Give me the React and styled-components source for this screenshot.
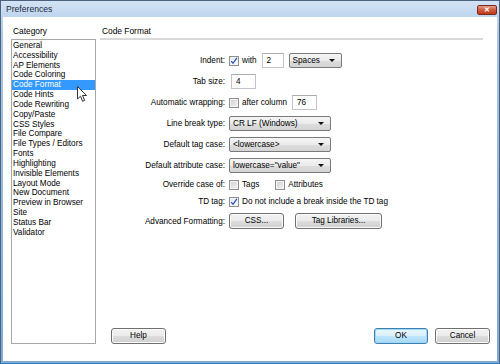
import React from "react"
import styled, { createGlobalStyle } from "styled-components"

const GlobalStyle = createGlobalStyle`
  html, body {
    margin: 0;
    padding: 0;
    background: #ffffff;
  }
  body {
    font-family: "Liberation Sans", Arial, sans-serif;
    font-size: 8.2px;
    color: #000000;
  }
`

const categories = [
  "General",
  "Accessibility",
  "AP Elements",
  "Code Coloring",
  "Code Format",
  "Code Hints",
  "Code Rewriting",
  "Copy/Paste",
  "CSS Styles",
  "File Compare",
  "File Types / Editors",
  "Fonts",
  "Highlighting",
  "Invisible Elements",
  "Layout Mode",
  "New Document",
  "Preview in Browser",
  "Site",
  "Status Bar",
  "Validator",
]

const CheckIcon = () => (
  <svg width="8" height="8" viewBox="0 0 8 8">
    <path d="M1.2 4.2 L3 6.3 L6.9 0.9" fill="none" stroke="#2f4fb8" strokeWidth="1.3" />
  </svg>
)

const Cursor = () => (
  <svg width="12" height="17" viewBox="0 0 12 17">
    <path
      d="M0.5 0.5 L0.5 13 L3.5 10.2 L5.6 15.3 L7.6 14.4 L5.5 9.5 L9.6 9.5 Z"
      fill="#ffffff"
      stroke="#333333"
      strokeWidth="1"
      strokeLinejoin="round"
    />
  </svg>
)

const App = () => {
  return (
    <>
      <GlobalStyle />
      <Window>
        <TitleBar>
          <Title>Preferences</Title>
          <CloseButton>✕</CloseButton>
        </TitleBar>
        <Body>
          <LeftColumn>
            <Heading>Category</Heading>
            <CategoryList>
              {categories.map((c) => (
                <CategoryItem key={c} selected={c === "Code Format"}>
                  {c}
                </CategoryItem>
              ))}
              <CursorWrap>
                <Cursor />
              </CursorWrap>
            </CategoryList>
          </LeftColumn>

          <RightColumn>
            <Heading>Code Format</Heading>
            <Separator />
            <Form>
              <Row>
                <Label>Indent:</Label>
                <Controls>
                  <Check>
                    <Box checked>
                      <CheckIcon />
                    </Box>
                    with
                  </Check>
                  <TextBox w={22}>2</TextBox>
                  <Select w={53} style={{ marginLeft: 2 }}>
                    Spaces
                    <Arrow />
                  </Select>
                </Controls>
              </Row>
              <Row>
                <Label>Tab size:</Label>
                <Controls>
                  <TextBox w={25}>4</TextBox>
                </Controls>
              </Row>
              <Row>
                <Label>Automatic wrapping:</Label>
                <Controls>
                  <Check>
                    <Box />
                    after column
                  </Check>
                  <TextBox w={25}>76</TextBox>
                </Controls>
              </Row>
              <Row>
                <Label>Line break type:</Label>
                <Controls>
                  <Select w={102}>
                    CR LF (Windows)
                    <Arrow />
                  </Select>
                </Controls>
              </Row>
              <Row>
                <Label>Default tag case:</Label>
                <Controls>
                  <Select w={102}>
                    &lt;lowercase&gt;
                    <Arrow />
                  </Select>
                </Controls>
              </Row>
              <Row>
                <Label>Default attribute case:</Label>
                <Controls>
                  <Select w={102}>
                    lowercase="value"
                    <Arrow />
                  </Select>
                </Controls>
              </Row>
              <Row h={11}>
                <Label>Override case of:</Label>
                <Controls gap={16}>
                  <Check>
                    <Box />
                    Tags
                  </Check>
                  <Check>
                    <Box />
                    Attributes
                  </Check>
                </Controls>
              </Row>
              <Row h={11}>
                <Label>TD tag:</Label>
                <Controls>
                  <Check>
                    <Box checked>
                      <CheckIcon />
                    </Box>
                    Do not include a break inside the TD tag
                  </Check>
                </Controls>
              </Row>
              <Row h={16}>
                <Label>Advanced Formatting:</Label>
                <Controls gap={11}>
                  <Button w={55}>CSS...</Button>
                  <Button w={87}>Tag Libraries...</Button>
                </Controls>
              </Row>
            </Form>
            <Footer>
              <Button w={55}>Help</Button>
              <FooterRight>
                <Button w={54} primary>
                  OK
                </Button>
                <Button w={55}>Cancel</Button>
              </FooterRight>
            </Footer>
          </RightColumn>
        </Body>
      </Window>
    </>
  )
}

export default App

const Window = styled.div`
  width: 500px;
  height: 364px;
  box-sizing: border-box;
  display: flex;
  flex-direction: column;
  border: 1px solid #4c6380;
  border-bottom-color: #2f7fc0;
  padding: 0 2px 2px 2px;
  background: linear-gradient(#c9dcf2, #a9c6e6 40px, #7fa9d6);
`

const TitleBar = styled.div`
  height: 16px;
  display: flex;
  align-items: center;
  justify-content: space-between;
  padding: 0 2px 0 5px;
  margin: 0 -2px;
  background: linear-gradient(#d3e3f5, #bed5ee);
`

const Title = styled.div`
  font-size: 8.6px;
  color: #1c2a3a;
`

const CloseButton = styled.div`
  width: 20px;
  height: 10px;
  box-sizing: border-box;
  margin-top: 2px;
  border: 1px solid #7b2a1c;
  border-radius: 2px;
  background: linear-gradient(#e69c88, #cf5a3e 50%, #c0391c);
  color: #ffffff;
  font-size: 7px;
  font-weight: bold;
  line-height: 8px;
  text-align: center;
`

const Body = styled.div`
  flex: 1;
  display: flex;
  gap: 4px;
  padding: 8px 7px 17px 8px;
  background: #ffffff;
`

const LeftColumn = styled.div`
  width: 85px;
  display: flex;
  flex-direction: column;
`

const RightColumn = styled.div`
  flex: 1;
  display: flex;
  flex-direction: column;
`

const Heading = styled.div`
  height: 12px;
  line-height: 12px;
  padding-left: 2px;
  font-size: 8.4px;
`

const Separator = styled.div`
  height: 2px;
  margin: 1px 7px 0 0;
  background: #d9d9d9;
`

const CategoryList = styled.div`
  position: relative;
  flex: 1;
  margin-top: 2px;
  padding-top: 1px;
  border: 1px solid #a8a8a8;
  background: #ffffff;
`

const CategoryItem = styled.div`
  height: 9.83px;
  line-height: 9.83px;
  padding-left: 1px;
  white-space: nowrap;
  background: ${(p) => (p.selected ? "#3399ff" : "transparent")};
  color: ${(p) => (p.selected ? "#ffffff" : "#000000")};
`

const CursorWrap = styled.div`
  position: absolute;
  left: 65px;
  top: 46px;
  line-height: 0;
`

const Form = styled.div`
  display: flex;
  flex-direction: column;
  gap: 6px;
  padding-top: 13px;
`

const Row = styled.div`
  height: ${(p) => p.h || 15}px;
  display: flex;
  align-items: center;
`

const Label = styled.div`
  width: 125px;
  flex-shrink: 0;
  text-align: right;
  white-space: nowrap;
`

const Controls = styled.div`
  display: flex;
  align-items: center;
  gap: ${(p) => (p.gap != null ? p.gap : 3)}px;
  margin-left: 4px;
`

const Check = styled.label`
  display: flex;
  align-items: center;
  gap: 3px;
  white-space: nowrap;
`

const Box = styled.span`
  width: 10px;
  height: 10px;
  box-sizing: border-box;
  display: flex;
  align-items: center;
  justify-content: center;
  border: 1px solid #8e8f8f;
  background: ${(p) =>
    p.checked
      ? "linear-gradient(135deg, #dfe9f5, #fafcff)"
      : "linear-gradient(135deg, #cfcfcf, #f4f4f4)"};
  box-shadow: inset 0 0 0 1px #f4f4f4;
`

const TextBox = styled.div`
  width: ${(p) => p.w}px;
  height: 15px;
  box-sizing: border-box;
  margin-left: 2px;
  padding-left: 4px;
  line-height: 13px;
  border: 1px solid #c2c6cc;
  border-top-color: #abadb3;
  background: #ffffff;
`

const Select = styled.div`
  position: relative;
  width: ${(p) => p.w}px;
  height: 15px;
  box-sizing: border-box;
  padding-left: 3px;
  line-height: 13px;
  white-space: nowrap;
  border: 1px solid #7a7a7a;
  border-radius: 2px;
  background: linear-gradient(#f5f5f5, #ebebeb 50%, #dddddd 51%, #d4d4d4);
`

const Arrow = styled.span`
  position: absolute;
  right: 6px;
  top: 5px;
  width: 0;
  height: 0;
  border-left: 3px solid transparent;
  border-right: 3px solid transparent;
  border-top: 3px solid #111111;
`

const Button = styled.div`
  width: ${(p) => p.w}px;
  height: 16px;
  box-sizing: border-box;
  line-height: 14px;
  text-align: center;
  border: 1px solid ${(p) => (p.primary ? "#3c7fb1" : "#707070")};
  border-radius: 3px;
  background: ${(p) =>
    p.primary
      ? "linear-gradient(#eaf6fd, #d9f0fc 50%, #bee6fd 51%, #a7d9f5)"
      : "linear-gradient(#f2f2f2, #ebebeb 50%, #dddddd 51%, #cfcfcf)"};
  box-shadow: inset 0 0 0 1px ${(p) => (p.primary ? "#9fd7f5" : "#fbfbfb")};
`

const Footer = styled.div`
  margin-top: auto;
  display: flex;
  justify-content: space-between;
  padding-left: 11px;
`

const FooterRight = styled.div`
  display: flex;
  gap: 7px;
`
